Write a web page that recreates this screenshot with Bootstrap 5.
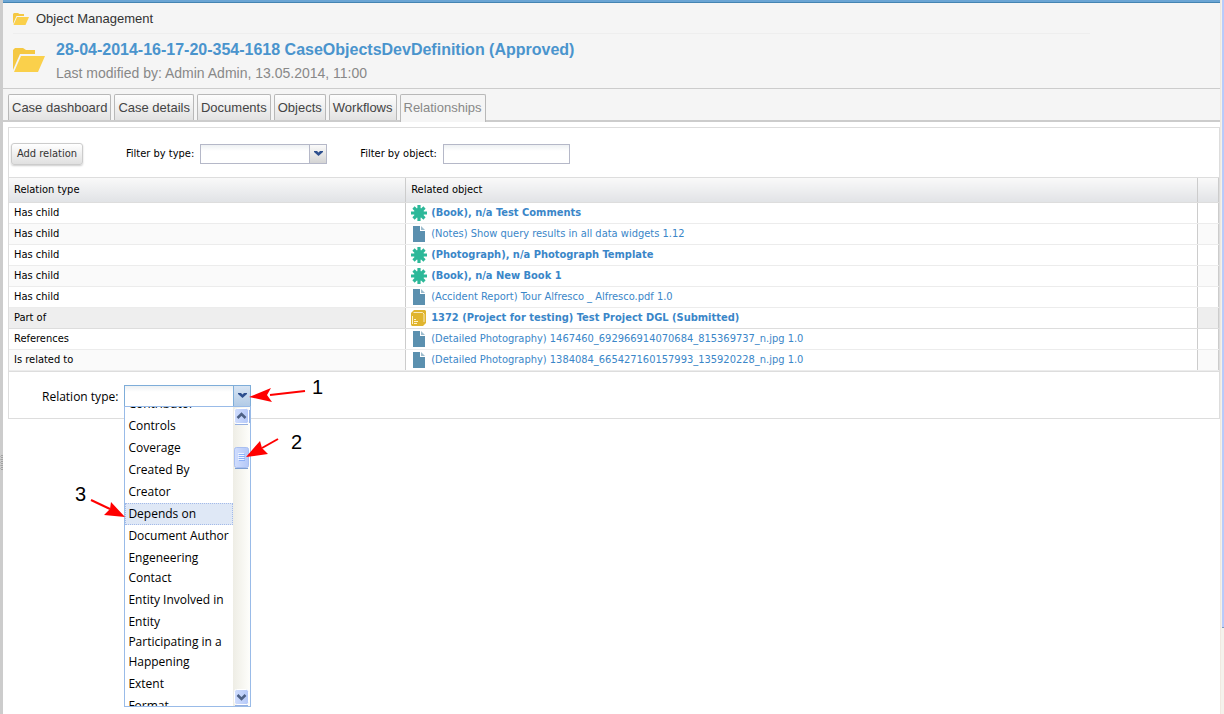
<!DOCTYPE html>
<html lang="en">
<head>
<meta charset="utf-8">
<meta name="viewport" content="width=device-width, initial-scale=1">
<title>Object Management</title>
<link href="https://cdn.jsdelivr.net/npm/bootstrap@5.3.0/dist/css/bootstrap.min.css" rel="stylesheet">
<style>
:root { --ui: "DejaVu Sans Condensed", "DejaVu Sans", sans-serif; --list: "Open Sans", "Noto Sans", sans-serif; --head: "Liberation Sans", Arial, sans-serif; }
body { font: 11px/20px var(--ui); color: #000; background: #fff; }
.splitter { width: 3px; background: #ccc; }
.splitter svg { position: absolute; left: 0; top: 455px; }
.page-scroll { width: 4px; background: #f4f2ec; border-left: 1px solid #f0e8e0; }
.page-thumb { height: 88vh; margin-left: 1px; background: #b9cbfb; border-bottom: 1px solid #7d9ac0; }
.top-strip { height: 3px; background: #6ba5d4; border-bottom: 1px solid #4484b2; }
.case-head { background: #f5f5f5; border-bottom: 1px solid #ccc; font-family: var(--head); padding: 0 10px; height: 86px; }
.crumb { height: 31px; padding-top: 2px; gap: 7px; border-bottom: 1px solid #eee; color: #333; font-size: 13px; margin-right: 120px; }
.crumb a { color: #333; text-decoration: none; }
.case-title { font-size: 16px; line-height: 20px; font-weight: 700; color: #4a94cd; margin: 0; }
.case-meta { font-size: 14px; line-height: 20px; color: #888; margin-top: 3px; }
.case-row { padding-top: 6px; gap: 11px; }
.case-tabs { background: #f5f5f5; border-bottom: 2px solid #ccc; padding: 5px 5px 0; gap: 3px; font-family: var(--head); height: 33px; }
.case-tabs .nav-link { border: 1px solid #b8b8b8; border-bottom: 0; border-radius: 2px 2px 0 0; padding: 2px 3px 0; font-size: 13px; line-height: 22px; height: 26px; color: #444; margin: 0; background: linear-gradient(#fdfdfd, #e2e2e2); }
.case-tabs .nav-link.active { background: #f5f5f5; color: #888; height: 28px; border-color: #b8b8b8; }
.work { margin: 5px 0 0 5px; border: 1px solid #ddd; }
.tools { height: 50px; padding: 2px 2px 0; border-bottom: 1px solid #ddd; }
.tools label { margin: 0 6px 0 33px; }
.tools .btn + label { margin-left: 43px; }
.btn-add { font-size: 11px; line-height: 18px; color: #333; height: 22px; padding: 1px 5px; border: 1px solid #ccc; border-radius: 3px; background: linear-gradient(#fff, #e0e0e0); box-shadow: 0 1px 2px #ccc; }
.field { width: 127px; height: 20px; min-height: 0; font-size: 11px; line-height: 16px; padding: 0 4px; border: 1px solid #b5b8c8; border-radius: 0; background: linear-gradient(#eef1f3, #fff 6px); }
.field:focus { box-shadow: none; border-color: #7eadd9; }
.drop { width: 127px; }
.drop select { appearance: none; display: block; }
.drop-arrow { position: absolute; right: 1px; top: 1px; width: 17px; height: 18px; border-left: 1px solid #b5b8c8; background: linear-gradient(#fafafa, #d4d4d4); pointer-events: none; }
.open-box .field { height: 22px; border-color: #7eadd9; }
.open-box .drop-arrow { height: 20px; border-color: #7eadd9; background: linear-gradient(#d7e4f3, #b2cbe6); }
.rel-table { table-layout: fixed; margin: 0; font-size: 11px; line-height: 20px; --bs-table-color: #000; }
.rel-table th { height: 24px; padding: 0 5px 2px; font-weight: 400; background: linear-gradient(#f9f9f9, #e1e3e6); border-bottom: 1px solid #ddd; }
.rel-table td { height: 21px; padding: 0 5px; border-bottom: 1px solid #ececec; overflow: hidden; white-space: nowrap; }
.rel-table th + th, .rel-table td + td { border-left: 1px solid #ccc; }
.rel-table th:last-child, .rel-table td:last-child { border-right: 1px solid #ccc; }
.rel-table tbody tr:nth-child(even) td:not(.obj) { background: #fafafa; }
.rel-table tbody tr.picked td { border-top: 1px solid #ddd; border-bottom: 1px solid #ddd; }
.rel-table tbody tr.picked td:not(.obj) { background: #eee; }
.rel-table tbody { border-bottom: 1px solid #ddd; }
.obj a { display: flex; align-items: center; gap: 4px; height: 20px; color: #3a86c8; text-decoration: none; }
.obj svg { width: 16px; height: 16px; flex: none; }
.obj a.strong-link { font-weight: 700; }
.new-relation { height: 47px; padding: 13px 0 0 33px; border-top: 1px solid #ddd; gap: 6px; }
.new-relation label { font: 12px/24px var(--list); }
.pick-list { position: absolute; left: 0; top: 21px; width: 127px; height: 301px; border: 1px solid #99bbe8; background: #fff; }
.pick-items { height: 299px; overflow: hidden; font: 12px/20px var(--list); }
.pick-items button { display: block; width: 100%; text-align: left; border: 1px dotted transparent; background: none; padding: 0 2px; color: #000; line-height: 20px; }
.pick-items button.chosen { background: #dfe8f6; border-color: #a3bae9; }
.pick-scroll { width: 17px; background: linear-gradient(90deg, #eeede5, #fefefb); }
.pick-scroll svg { display: block; }
.note { position: absolute; left: -124px; top: -15px; overflow: visible; pointer-events: none; }
.note text { font: 20px var(--head); fill: #000; }
.note line { stroke: #f00; stroke-width: 2; }
.note polygon { fill: #f00; }
</style>
</head>
<body>
<svg class="d-none" xmlns="http://www.w3.org/2000/svg">
  <symbol id="i-star" viewBox="0 0 16 16"><path d="M8 0v16M0 8h16M2.500 2.500l11 11M13.500 2.500l-11 11" stroke="#2db899" stroke-width="3.200"/><circle cx="8" cy="8" r="5" fill="#2db899"/></symbol>
  <symbol id="i-doc" viewBox="0 0 16 16"><path d="M2 0h7v5h5v11H2z" fill="#5b90af"/><path d="M10 0l4 4h-4z" fill="#9dbccd"/></symbol>
  <symbol id="i-book" viewBox="0 0 16 16"><path d="M0 3l3-3h11l1 1v12l-3 3H1l-1-1z" fill="#e0b52f"/><path d="M2.500 2.500h9l1.500 1.500v8" fill="none" stroke="#f8ebc2"/><path d="M1.500 6v8M3 9.500h2M3 11.500h4M3 13.500h3" stroke="#fff2cb"/></symbol>
  <symbol id="i-folder" viewBox="0 0 32 24"><path d="M0 2l2-2h8l3 2h9v4H7L3 15 0 22z" fill="#f5c842"/><path d="M8 8h24l-7 16H1z" fill="#fad04b"/></symbol>
  <symbol id="i-chev" viewBox="0 0 9 6"><path d="M0 0h3l1.500 1.500L6 0h3v1L4.500 5 0 1z" fill="#2d4f8e"/></symbol>
</svg>

<div class="d-flex min-vh-100">
  <div class="splitter flex-shrink-0"><svg width="3" height="15" aria-hidden="true"><path d="M2 0v15" stroke="#777" stroke-dasharray="1 1"/><path d="M0 1v14" stroke="#999" stroke-dasharray="1 2"/></svg></div>
  <main class="flex-grow-1">
    <div class="top-strip"></div>
    <header class="case-head">
      <nav class="crumb d-flex align-items-center" aria-label="Breadcrumb">
        <svg width="16" height="12" aria-hidden="true"><use href="#i-folder"/></svg><a href="#">Object Management</a>
      </nav>
      <div class="case-row d-flex">
        <svg class="mt-2" width="32" height="24" aria-hidden="true"><use href="#i-folder"/></svg>
        <div>
          <h1 class="case-title">28-04-2014-16-17-20-354-1618 CaseObjectsDevDefinition (Approved)</h1>
          <div class="case-meta">Last modified by: Admin Admin, 13.05.2014, 11:00</div>
        </div>
      </div>
    </header>
    <nav class="case-tabs nav nav-tabs flex-nowrap">
      <a class="nav-link" href="#">Case dashboard</a>
      <a class="nav-link" href="#">Case details</a>
      <a class="nav-link" href="#">Documents</a>
      <a class="nav-link" href="#">Objects</a>
      <a class="nav-link" href="#">Workflows</a>
      <a class="nav-link active" href="#" aria-current="page">Relationships</a>
    </nav>

    <section class="work">
      <div class="tools d-flex align-items-center">
        <button type="button" class="btn btn-add">Add relation</button>
        <label for="byType">Filter by type:</label>
        <div class="drop position-relative">
          <select id="byType" class="field"><option></option><option>Has child</option><option>Part of</option></select>
          <span class="drop-arrow d-flex align-items-center justify-content-center"><svg width="9" height="6"><use href="#i-chev"/></svg></span>
        </div>
        <label for="byObject">Filter by object:</label>
        <input id="byObject" type="text" class="field">
      </div>

      <table class="table table-borderless rel-table">
        <colgroup><col style="width:32.800%"><col><col style="width:21px"></colgroup>
        <thead><tr><th scope="col">Relation type</th><th scope="col">Related object</th><th></th></tr></thead>
        <tbody>
          <tr><td>Has child</td><td class="obj"><a class="strong-link" href="#"><svg><use href="#i-star"/></svg>(Book), n/a Test Comments</a></td><td></td></tr>
          <tr><td>Has child</td><td class="obj"><a href="#"><svg><use href="#i-doc"/></svg>(Notes) Show query results in all data widgets 1.12</a></td><td></td></tr>
          <tr><td>Has child</td><td class="obj"><a class="strong-link" href="#"><svg><use href="#i-star"/></svg>(Photograph), n/a Photograph Template</a></td><td></td></tr>
          <tr><td>Has child</td><td class="obj"><a class="strong-link" href="#"><svg><use href="#i-star"/></svg>(Book), n/a New Book 1</a></td><td></td></tr>
          <tr><td>Has child</td><td class="obj"><a href="#"><svg><use href="#i-doc"/></svg>(Accident Report) Tour Alfresco _ Alfresco.pdf 1.0</a></td><td></td></tr>
          <tr class="picked"><td>Part of</td><td class="obj"><a class="strong-link" href="#"><svg><use href="#i-book"/></svg>1372 (Project for testing) Test Project DGL (Submitted)</a></td><td></td></tr>
          <tr><td>References</td><td class="obj"><a href="#"><svg><use href="#i-doc"/></svg>(Detailed Photography) 1467460_692966914070684_815369737_n.jpg 1.0</a></td><td></td></tr>
          <tr><td>Is related to</td><td class="obj"><a href="#"><svg><use href="#i-doc"/></svg>(Detailed Photography) 1384084_665427160157993_135920228_n.jpg 1.0</a></td><td></td></tr>
        </tbody>
      </table>

      <div class="new-relation d-flex align-items-start">
        <label for="relType">Relation type:</label>
        <div class="drop open-box position-relative">
          <input id="relType" type="text" class="field d-block" role="combobox" aria-expanded="true" aria-controls="relList">
          <span class="drop-arrow d-flex align-items-center justify-content-center"><svg width="9" height="6"><use href="#i-chev"/></svg></span>
          <div class="pick-list d-flex">
            <div class="pick-items flex-grow-1" id="relList" role="listbox">
              <button type="button" role="option">Contributor</button>
              <button type="button" role="option">Controls</button>
              <button type="button" role="option">Coverage</button>
              <button type="button" role="option">Created By</button>
              <button type="button" role="option">Creator</button>
              <button type="button" role="option" class="chosen" aria-selected="true">Depends on</button>
              <button type="button" role="option">Document Author</button>
              <button type="button" role="option">Engeneering Contact</button>
              <button type="button" role="option">Entity Involved in</button>
              <button type="button" role="option">Entity Participating in a Happening</button>
              <button type="button" role="option">Extent</button>
              <button type="button" role="option">Format</button>
            </div>
            <div class="pick-scroll d-flex flex-column justify-content-between flex-shrink-0">
              <svg width="17" height="62" aria-hidden="true">
                <defs><linearGradient id="g"><stop stop-color="#d0ddfd"/><stop offset="1" stop-color="#b4c8f8"/></linearGradient></defs>
                <rect x="1.500" y="1.500" width="14" height="15" rx="2" fill="url(#g)" stroke="#fff"/><path d="M2 17.500h13M16.500 3v13" stroke="#96b0e0"/><path d="M4.500 11l4-4 4 4" fill="none" stroke="#4d6185" stroke-width="2.500"/>
                <rect x="1.500" y="40.500" width="14" height="20" rx="2" fill="url(#g)" stroke="#a9bff0"/><path d="M2 61.500h13" stroke="#7d9fd3"/><path d="M5 46.500h6M5 48.500h6M5 50.500h6M5 52.500h6" stroke="#eef4fe"/><path d="M6 47.500h6M6 49.500h6M6 51.500h6M6 53.500h6" stroke="#8cb0f8"/>
              </svg>
              <svg width="17" height="18" aria-hidden="true"><rect x="1.500" y="1.500" width="14" height="15" rx="2" fill="url(#g)" stroke="#fff"/><path d="M2 17.500h13" stroke="#96b0e0"/><path d="M4.500 7l4 4 4-4" fill="none" stroke="#4d6185" stroke-width="2.500"/></svg>
            </div>
          </div>
          <svg class="note" width="330" height="150">
            <line x1="305" y1="21" x2="270" y2="25"/><polygon points="249,27 271,18 267,25 272,32"/><text x="312" y="24">1</text>
            <line x1="278" y1="69" x2="262" y2="78"/><polygon points="246,87 260,71 262,78 268,84"/><text x="291" y="79">2</text>
            <line x1="91" y1="130" x2="110" y2="139"/><polygon points="125,147 111,132 110,139 104,145"/><text x="75" y="131">3</text>
          </svg>
        </div>
      </div>
    </section>
  </main>
  <div class="page-scroll flex-shrink-0" aria-hidden="true"><div class="page-thumb"></div></div>
</div>
<script src="https://cdn.jsdelivr.net/npm/bootstrap@5.3.0/dist/js/bootstrap.bundle.min.js"></script>
<script>
// Open the list with the first visible option partly scrolled away.
document.getElementById('relList').scrollTop = 14;
</script>
</body>
</html>
